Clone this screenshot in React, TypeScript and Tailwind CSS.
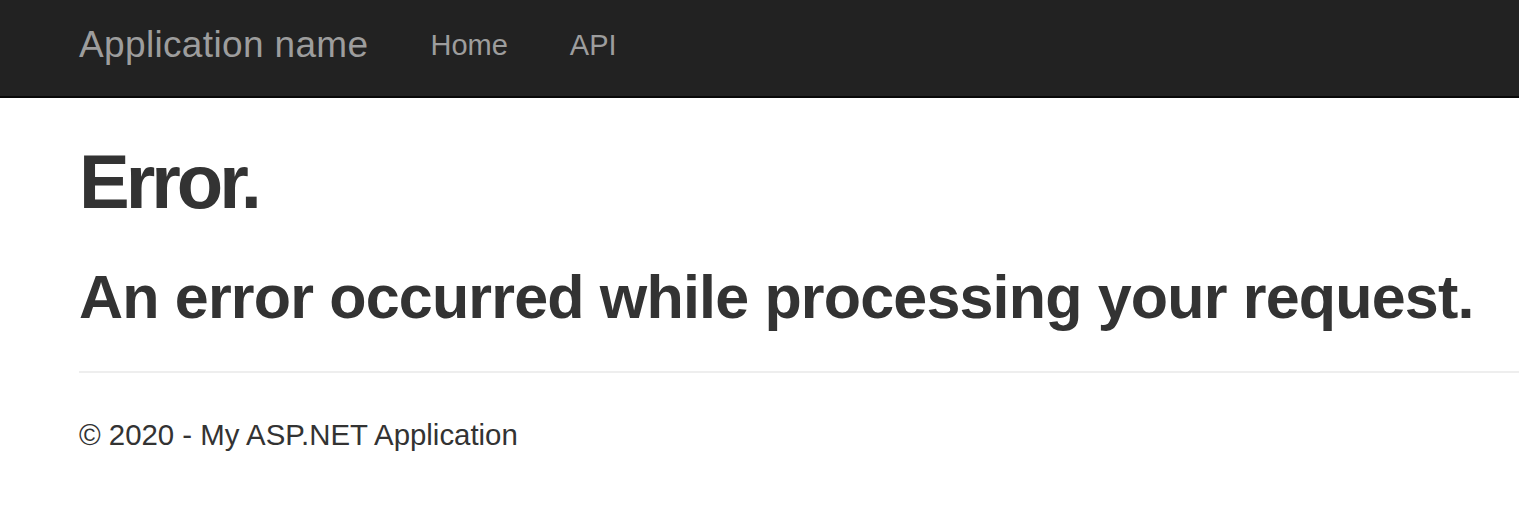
export default function App() {
  return (
    <div className="min-h-[517px] bg-white font-['Liberation_Sans',Arial,sans-serif] text-[#333]">
      {/* navbar */}
      <nav className="flex h-[98px] items-start border-b-2 border-[#080808] bg-[#222] pl-[79px] pt-[26px]">
        <a className="text-[37px] leading-none tracking-[0.35px] text-[#9d9d9d]">Application name</a>
        <ul className="ml-[62px] mt-[5px] flex gap-[62px] text-[29px] leading-none text-[#9d9d9d]">
          <li>Home</li>
          <li>API</li>
        </ul>
      </nav>

      <div className="pl-[79px]">
        <h1 className="mt-[42px] text-[76px] font-bold leading-[1.1] tracking-[-4px]">Error.</h1>
        <h2 className="mt-[40px] whitespace-nowrap text-[61px] font-bold leading-[1.1] tracking-[-0.82px]">
          An error occurred while processing your request.
        </h2>
        <hr className="mt-[40px] border-t-2 border-[#eee]" />
        <footer className="mt-[42px] text-[29.4px] leading-[40px]">
          <p>© 2020 - My ASP.NET Application</p>
        </footer>
      </div>
    </div>
  );
}
